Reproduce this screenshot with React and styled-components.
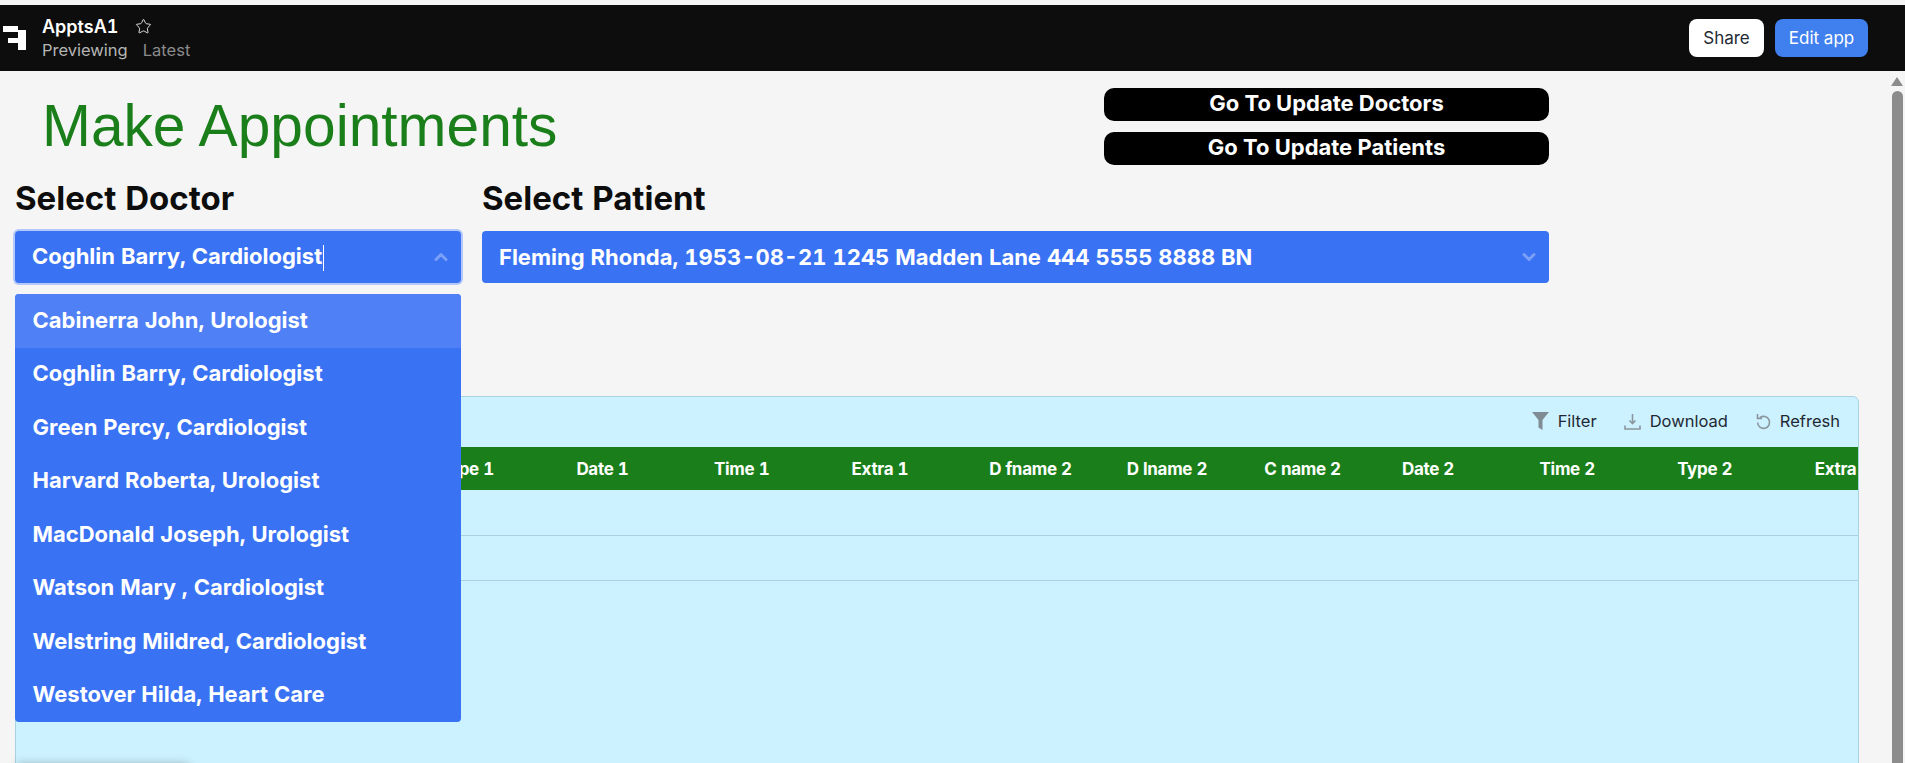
import React from "react";
import styled, { createGlobalStyle } from "styled-components";
import { ChevronDown, ChevronUp, Star } from "lucide-react";

const doctors = [
    "Cabinerra John, Urologist",
    "Coghlin Barry, Cardiologist",
    "Green Percy, Cardiologist",
    "Harvard Roberta, Urologist",
    "MacDonald Joseph, Urologist",
    "Watson Mary , Cardiologist",
    "Welstring Mildred, Cardiologist",
    "Westover Hilda, Heart Care",
];

const columns = [
    "D fname 1",
    "D lname 1",
    "C name 1",
    "Type 1",
    "Date 1",
    "Time 1",
    "Extra 1",
    "D fname 2",
    "D lname 2",
    "C name 2",
    "Date 2",
    "Time 2",
    "Type 2",
    "Extra 2",
];

const GlobalStyle = createGlobalStyle`
    html, body {
        margin: 0;
        padding: 0;
        height: 100%;
        overflow: hidden;
        background: #f5f5f5;
    }
    * {
        box-sizing: border-box;
    }
    body {
        font-family: Inter, "Liberation Sans", sans-serif;
        font-variant-numeric: tabular-nums;
    }
`;

const Page = styled.div`
    position: relative;
    height: 763px;
    padding-top: 5px;
    display: flex;
    flex-direction: column;
    overflow: hidden;
    background: #f5f5f5;
`;

const TopBar = styled.header`
    flex: 0 0 66px;
    display: flex;
    align-items: center;
    justify-content: space-between;
    padding: 0 37px 0 3px;
    background: #0d0d0d;
`;

const Brand = styled.div`
    display: flex;
    align-items: center;
    gap: 15px;
`;

const AppInfo = styled.div`
    display: flex;
    flex-direction: column;
    gap: 4px;
`;

const AppLine = styled.div`
    display: flex;
    align-items: center;
    gap: ${(p) => p.$gap}px;
    height: 20px;
`;

const AppName = styled.span`
    color: #fff;
    font-size: 18px;
    font-weight: 600;
`;

const Status = styled.span`
    color: ${(p) => p.$color};
    font-size: 16.5px;
`;

const Actions = styled.div`
    display: flex;
    gap: 11px;
`;

const HeadButton = styled.button`
    height: 38px;
    width: ${(p) => p.$width}px;
    padding: 0;
    border: none;
    border-radius: 8px;
    font-family: inherit;
    font-size: 17px;
    color: ${(p) => (p.$primary ? "#fff" : "#1f2933")};
    background: ${(p) => (p.$primary ? "#4080ee" : "#fff")};
`;

const Body = styled.div`
    flex: 1;
    display: flex;
    min-height: 0;
`;

const Main = styled.main`
    flex: 1;
    min-width: 0;
    padding: 17px 29px 0 15px;
    display: flex;
    flex-direction: column;
`;

const TopGrid = styled.div`
    display: grid;
    grid-template-columns: 446px 1067px;
    column-gap: 21px;
`;

const HeaderRow = styled.div`
    grid-column: 1 / -1;
    display: flex;
    justify-content: space-between;
    height: 91px;
`;

const Title = styled.h1`
    margin: 0 0 0 27px;
    font-family: "Liberation Sans", Arial, sans-serif;
    font-size: 58.7px;
    font-weight: 400;
    line-height: 75px;
    color: #1a7f1a;
`;

const LinkColumn = styled.div`
    width: 445px;
    display: flex;
    flex-direction: column;
    gap: 11px;
`;

const LinkButton = styled.button`
    height: 33px;
    border: none;
    border-radius: 10px;
    background: #000;
    color: #fff;
    font-family: inherit;
    font-size: 22px;
    font-weight: 700;
    line-height: 31px;
    padding: 0 0 2px;
`;

const Field = styled.div`
    position: relative;
`;

const FieldLabel = styled.h2`
    margin: 0;
    height: 52px;
    font-size: 33px;
    font-weight: 700;
    line-height: 39px;
    color: #0d0d0d;
`;

const SelectBox = styled.div`
    height: 52px;
    display: flex;
    align-items: center;
    justify-content: space-between;
    padding: 0 10px 0 17px;
    border-radius: 4px;
    background: #3a72f4;
    color: #fff;
    font-size: 22px;
    font-weight: 700;
    box-shadow: ${(p) => (p.$open ? "0 0 0 2px #b4c9f9" : "none")};
    svg {
        color: #7ba0f7;
    }
`;

const Caret = styled.span`
    display: inline-block;
    width: 1px;
    height: 26px;
    margin-left: 1px;
    background: #fff;
    vertical-align: middle;
`;

const Menu = styled.ul`
    position: absolute;
    top: 115px;
    left: 0;
    z-index: 5;
    width: 446px;
    margin: 0;
    padding: 0;
    list-style: none;
    border-radius: 4px;
    overflow: hidden;
    background: #3a72f4;
`;

const MenuItem = styled.li`
    height: 53.5px;
    display: flex;
    align-items: center;
    padding: 0 17.5px 2px;
    color: #fff;
    font-size: 22px;
    font-weight: 700;
    background: ${(p) => (p.$active ? "#4f80f6" : "transparent")};
`;

const TableCard = styled.section`
    margin-top: 113px;
    height: 400px;
    flex-shrink: 0;
    border: 1px solid #a9d3e2;
    border-radius: 6px 6px 0 0;
    background: #cdf2ff;
    overflow: hidden;
`;

const TableTools = styled.div`
    height: 50px;
    padding: 0 18px 2px 0;
    display: flex;
    justify-content: flex-end;
    align-items: center;
    gap: 27px;
`;

const Tool = styled.span`
    display: flex;
    align-items: center;
    gap: ${(p) => p.$gap}px;
    font-size: 16.5px;
    color: #1f2933;
`;

const HeadRow = styled.div`
    height: 43px;
    padding: 1px 0 0 10px;
    display: grid;
    grid-template-columns: repeat(14, 137.6px);
    align-items: center;
    background: #1a7f1a;
    overflow: hidden;
`;

const HeadCell = styled.div`
    color: #fff;
    font-size: 17px;
    font-weight: 700;
    letter-spacing: -0.3px;
    white-space: nowrap;
`;

const Row = styled.div`
    height: 45.5px;
    border-bottom: 1px solid #a9d3e2;
`;

const Scrollbar = styled.div`
    flex: 0 0 17px;
    padding: 6px 2px 0 4px;
    display: flex;
    flex-direction: column;
    gap: 5px;
`;

const ScrollArrow = styled.div`
    width: 0;
    height: 0;
    margin-left: -1px;
    border-left: 6px solid transparent;
    border-right: 6px solid transparent;
    border-bottom: 9px solid #8c8c8c;
`;

const ScrollThumb = styled.div`
    flex: 1;
    width: 11px;
    border-radius: 6px 6px 0 0;
    background: #8c8c8c;
`;

// just the shadow of a panel that sits below the fold
const FloatingPanel = styled.div`
    position: absolute;
    left: 15px;
    bottom: -30px;
    width: 175px;
    height: 30px;
    border-radius: 6px;
    box-shadow: 0 0 10px rgba(0, 0, 0, 0.22);
`;

const Logo = () => (
    <svg width="24" height="24" viewBox="0 0 24 24" fill="#fff">
        <path d="M0 0H15V4H23V24H15V17H5V12H15V6H0Z" />
    </svg>
);

const FilterIcon = () => (
    <svg width="17" height="18" viewBox="0 0 17 18" fill="#7f8c94">
        <path d="M0 0H17L10.5 8V18L6.5 15.5V8Z" />
    </svg>
);

const DownloadIcon = () => (
    <svg width="17" height="17" viewBox="0 0 17 17" fill="none" stroke="#8a959d" strokeWidth="1.6">
        <path d="M8.5 1V10M5.5 7.5L8.5 10.5 11.5 7.5" />
        <path d="M1 12.5V16H16V12.5" />
    </svg>
);

const RefreshIcon = () => (
    <svg width="17" height="17" viewBox="0 0 17 17" fill="none" stroke="#8a959d" strokeWidth="1.6">
        <path d="M5 4.6A6 6 0 1 1 2.6 9.5" />
        <path d="M2.5 1V5.4H7" />
    </svg>
);

const App = () => {
    return (
        <Page>
            <GlobalStyle />
            <TopBar>
                <Brand>
                    <Logo />
                    <AppInfo>
                        <AppLine $gap={17}>
                            <AppName>ApptsA1</AppName>
                            <Star size={17} color="#ddd" strokeWidth={1.4} />
                        </AppLine>
                        <AppLine $gap={15}>
                            <Status $color="#b5b5b5">Previewing</Status>
                            <Status $color="#8a8a8a">Latest</Status>
                        </AppLine>
                    </AppInfo>
                </Brand>
                <Actions>
                    <HeadButton $width={75}>Share</HeadButton>
                    <HeadButton $width={93} $primary>
                        Edit app
                    </HeadButton>
                </Actions>
            </TopBar>
            <Body>
                <Main>
                    <TopGrid>
                        <HeaderRow>
                            <Title>Make Appointments</Title>
                            <LinkColumn>
                                <LinkButton>Go To Update Doctors</LinkButton>
                                <LinkButton>Go To Update Patients</LinkButton>
                            </LinkColumn>
                        </HeaderRow>
                        <Field>
                            <FieldLabel>Select Doctor</FieldLabel>
                            <SelectBox $open>
                                <span>
                                    Coghlin Barry, Cardiologist
                                    <Caret />
                                </span>
                                <ChevronUp size={20} strokeWidth={3.5} />
                            </SelectBox>
                            <Menu>
                                {doctors.map((name, index) => (
                                    <MenuItem key={name} $active={index === 0}>
                                        {name}
                                    </MenuItem>
                                ))}
                            </Menu>
                        </Field>
                        <Field>
                            <FieldLabel>Select Patient</FieldLabel>
                            <SelectBox>
                                <span>Fleming Rhonda, 1953-08-21 1245 Madden Lane 444 5555 8888 BN</span>
                                <ChevronDown size={20} strokeWidth={3.5} />
                            </SelectBox>
                        </Field>
                    </TopGrid>
                    <TableCard>
                        <TableTools>
                            <Tool $gap={9}>
                                <FilterIcon />
                                Filter
                            </Tool>
                            <Tool $gap={9}>
                                <DownloadIcon />
                                Download
                            </Tool>
                            <Tool $gap={8}>
                                <RefreshIcon />
                                Refresh
                            </Tool>
                        </TableTools>
                        <HeadRow>
                            {columns.map((col) => (
                                <HeadCell key={col}>{col}</HeadCell>
                            ))}
                        </HeadRow>
                        <Row />
                        <Row />
                    </TableCard>
                </Main>
                <Scrollbar>
                    <ScrollArrow />
                    <ScrollThumb />
                </Scrollbar>
            </Body>
            <FloatingPanel />
        </Page>
    );
};

export default App;
